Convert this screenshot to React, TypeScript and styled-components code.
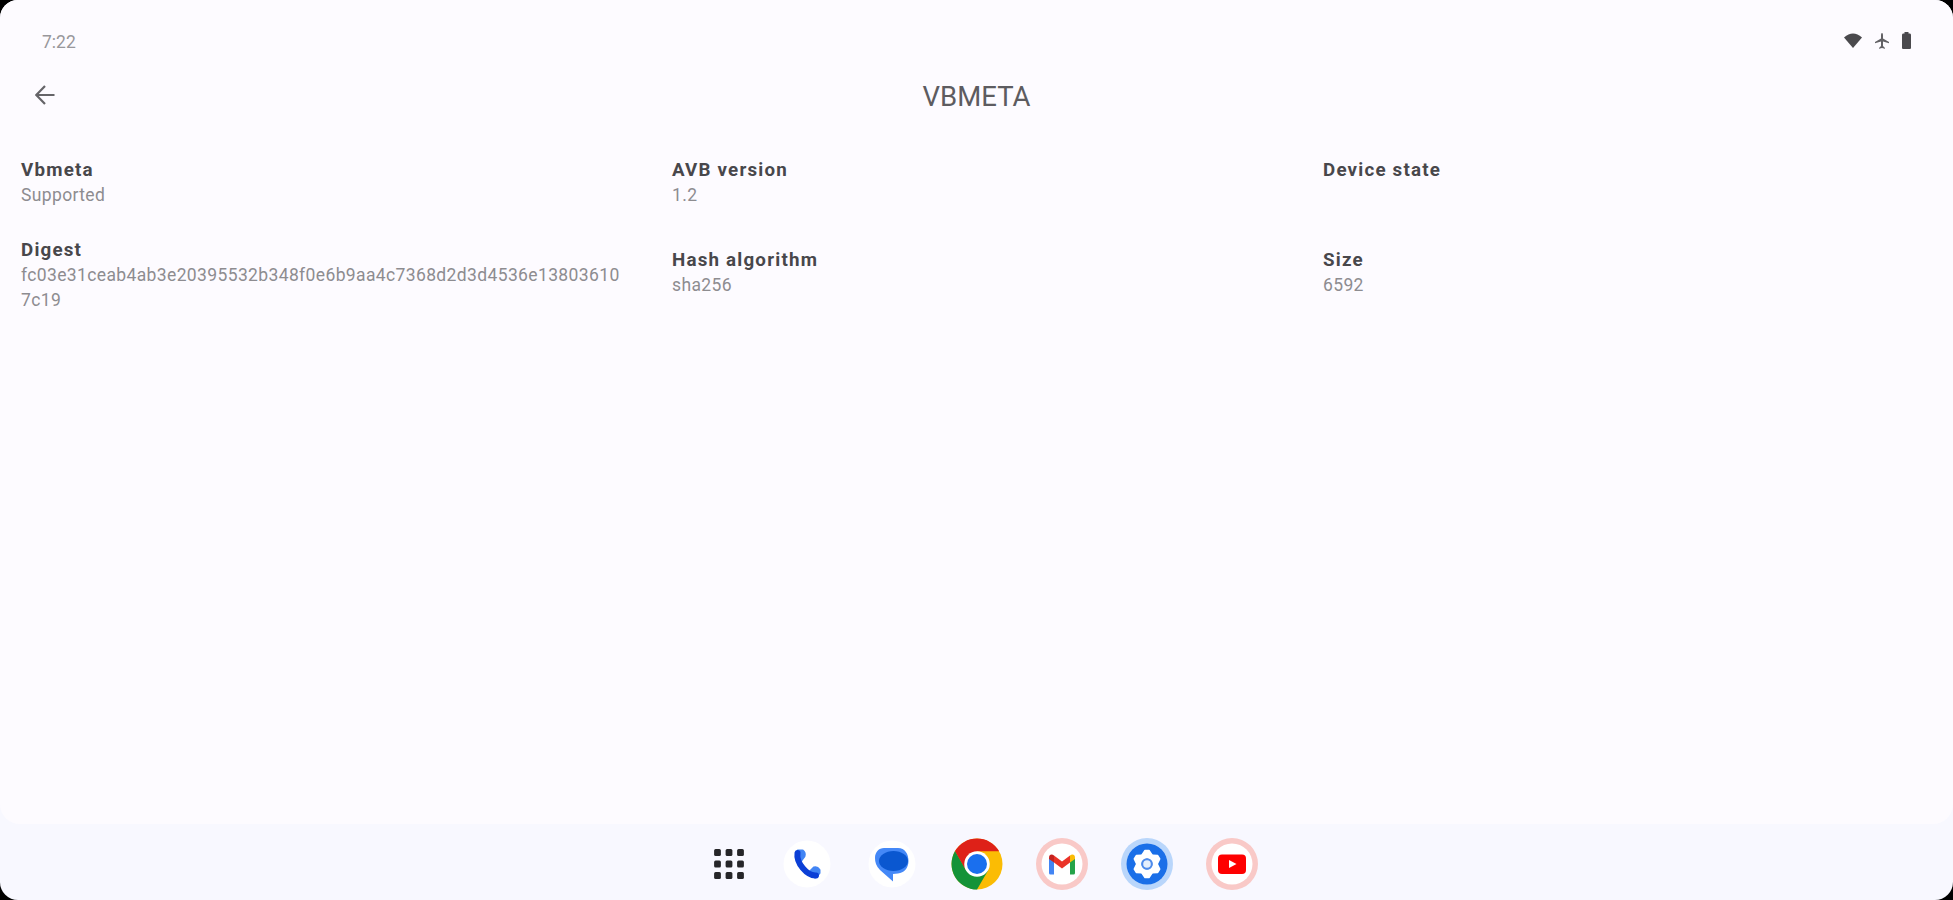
import React from "react"
import styled, { createGlobalStyle } from "styled-components"

const GlobalStyle = createGlobalStyle`
  body {
    margin: 0;
    background: #000;
    font-family: Roboto, "Liberation Sans", sans-serif;
  }
`

const Screen = styled.div`
  display: flex;
  flex-direction: column;
  height: 900px;
  overflow: hidden;
  border-radius: 18px;
  background: #f8f8ff;
`

const Panel = styled.main`
  flex: 1;
  border-radius: 0 0 20px 20px;
  background: #fdfbff;
`

const StatusBar = styled.header`
  display: flex;
  align-items: center;
  justify-content: space-between;
  box-sizing: border-box;
  height: 64px;
  padding: 17px 42px 0 42px;
`

const Clock = styled.span`
  padding-top: 3px;
  font-size: 17.5px;
  line-height: 20px;
  color: #98979b;
`

const StatusIcons = styled.div`
  display: flex;
  align-items: center;
  gap: 12px;

  > svg {
    display: block;
  }
`

const AppBar = styled.div`
  display: grid;
  grid-template-columns: 80px 1fr 80px;
  align-items: center;
  height: 64px;
`

const BackButton = styled.button`
  display: flex;
  width: 40px;
  margin-left: 25px;
  padding: 0 0 3px;
  justify-content: center;
  border: 0;
  background: none;
`

const Title = styled.h1`
  margin: 0;
  font-size: 27.5px;
  font-weight: 400;
  line-height: 35px;
  text-align: center;
  color: #5d5c60;
`

const InfoGrid = styled.div`
  display: grid;
  grid-template-columns: repeat(3, 1fr);
  row-gap: 25px;
  align-items: center;
  padding-top: 30px;
`

const Cell = styled.div`
  padding: 0 25px 0 21px;
`

const Label = styled.div`
  font-size: 18.75px;
  font-weight: 700;
  line-height: 25px;
  letter-spacing: 1.2px;
  color: #48474b;
`

const Value = styled.div`
  min-height: 30px;
  font-size: 17.5px;
  line-height: 25px;
  letter-spacing: 0.37px;
  word-break: break-all;
  color: #8d8c90;
`

const Taskbar = styled.nav`
  display: flex;
  align-items: center;
  justify-content: center;
  gap: 33px;
  box-sizing: border-box;
  height: 76px;
  padding: 3px 0 0 7px;

  > svg {
    display: block;
  }

  > svg:first-child {
    margin-right: -7px;
  }
`

const items = [
  { label: "Vbmeta", value: "Supported" },
  { label: "AVB version", value: "1.2" },
  { label: "Device state", value: "" },
  {
    label: "Digest",
    value: "fc03e31ceab4ab3e20395532b348f0e6b9aa4c7368d2d3d4536e138036107c19",
  },
  { label: "Hash algorithm", value: "sha256" },
  { label: "Size", value: "6592" },
]

const Icon = ({ children }: { children: React.ReactNode }) => (
  <svg width="52" height="52" viewBox="-26 -26 52 52">
    {children}
  </svg>
)

const AppsIcon = () => (
  <Icon>
    {[-11.5, 0, 11.5].map(y =>
      [-11.5, 0, 11.5].map(x => (
        <rect
          key={`${x}${y}`}
          x={x - 3.4}
          y={y - 3.4}
          width="6.8"
          height="6.8"
          rx="1.5"
          fill="#262629"
        />
      ))
    )}
  </Icon>
)

const PhoneIcon = () => (
  <Icon>
    <circle r="23.5" fill="#fff" />
    <path
      d="M-9-13-4.500-13Q-2-11-3-8L-6-4ZM3 8 7 4Q10 3 12 6V9L8 13Z"
      fill="#4285f4"
      stroke="#4285f4"
      strokeWidth="3"
      strokeLinejoin="round"
    />
    <path
      d="M-9.500-11C-11-1 0 12 9 11.500"
      fill="none"
      stroke="#0b3fd6"
      strokeWidth="6"
      strokeLinecap="round"
    />
  </Icon>
)

const MessagesIcon = () => (
  <Icon>
    <circle r="23.500" fill="#fff" />
    <path
      d="M-8-16H6C13-16 16.500-10 16.500-3 16.500 4 12 9 6 9.500L1 10V17.500L-12 6C-16 2-17-2-17-6-17-12-13-16-8-16Z"
      fill="#4488f7"
    />
    <ellipse cx="1.500" cy="-3" rx="14.500" ry="10" fill="#0a57d0" />
  </Icon>
)

const ChromeIcon = () => (
  <Icon>
    <circle r="25.500" fill="#fbbc04" />
    <path d="M0 0-22.080-12.750A25.500 25.500 0 0 1 22.080-12.750L0-12.750Z" fill="#de2118" />
    <path
      d="M-22.080-12.750A25.500 25.500 0 0 0 0 25.500L11.040 6.375 0 0-11.040 6.375Z"
      fill="#149338"
    />
    <path d="M0-12.750H-11L-11.040 6.375-22.080-12.750Z" fill="#de2118" />
    <path d="M-22.080-12.750-11.040 6.375 0 12.750-6 18-22 6Z" fill="#149338" />
    <circle r="12.750" fill="#fff" />
    <circle r="10" fill="#1a6fee" />
  </Icon>
)

const GmailIcon = () => (
  <Icon>
    <circle r="26" fill="#f9c9c7" />
    <circle r="20.500" fill="#fff" />
    <path d="M-13-6-8-2.500V10.500H-11.500Q-13 10.500-13 9Z" fill="#4285f4" />
    <path d="M13-6 8-2.500V10.500H11.500Q13 10.500 13 9Z" fill="#25a349" />
    <path d="M-8-8.500 0-2.500 8-8.500V-1.500L0 4.500-8-1.500Z" fill="#ea3328" />
    <path d="M-13-6C-13-10-10-10-8-8.500V-1.500L-13-5Z" fill="#c5221f" />
    <path d="M13-6C13-10 10-10 8-8.500V-1.500L13-5Z" fill="#fbbc04" />
  </Icon>
)

const SettingsIcon = () => (
  <Icon>
    <circle r="26" fill="#b9d6fb" />
    <circle r="20.500" fill="#1a6fe8" />
    {[0, 60, 120, 180, 240, 300].map(a => (
      <path
        key={a}
        d="M-5-9-2-13.500H2L5-9Z"
        fill="#fff"
        stroke="#fff"
        strokeWidth="1.500"
        strokeLinejoin="round"
        transform={`rotate(${a})`}
      />
    ))}
    <circle r="8" fill="none" stroke="#fff" strokeWidth="5" />
    <circle r="4.800" fill="#e6effc" stroke="#4f8bea" strokeWidth="2" />
  </Icon>
)

const YoutubeIcon = () => (
  <Icon>
    <circle r="26" fill="#f9c9c7" />
    <circle r="20.500" fill="#fff" />
    <rect x="-14" y="-9.500" width="28" height="19.500" rx="4" fill="#fe0000" />
    <path d="M-3-4 4.500 0-3 4Z" fill="#fff" />
  </Icon>
)

const App: React.FC = () => {
  return (
    <>
      <GlobalStyle />
      <Screen>
        <Panel>
          <StatusBar>
            <Clock>7:22</Clock>
            <StatusIcons>
              <svg width="18" height="16" viewBox="0 0 18 16">
                <path d="M0 4.500Q9-3.500 18 4.500L9 15Z" fill="#4a494d" />
              </svg>
              <svg width="16" height="18" viewBox="0 0 16 18">
                <path
                  d="M8 1Q9 1 9 3V6.500L15 10V11.200L9 9.500V14L11 16V16.800L8 16 5 16.800V16L7 14V9.500L1 11.200V10L7 6.500V3Q7 1 8 1Z"
                  fill="#626165"
                />
              </svg>
              <svg width="9" height="17" viewBox="0 0 9 17">
                <path
                  d="M2.500 0H6.500V1.500H8Q9 1.500 9 3V15.500Q9 17 8 17H1Q0 17 0 15.500V3Q0 1.500 1 1.500H2.500Z"
                  fill="#4a494d"
                />
              </svg>
            </StatusIcons>
          </StatusBar>
          <AppBar>
            <BackButton aria-label="Back">
              <svg width="20" height="20" viewBox="0 0 20 20">
                <path
                  d="M19.500 10H1.500M10 1 1.300 10 10 19"
                  fill="none"
                  stroke="#656468"
                  strokeWidth="2.200"
                />
              </svg>
            </BackButton>
            <Title>VBMETA</Title>
          </AppBar>
          <InfoGrid>
            {items.map(t => (
              <Cell key={t.label}>
                <Label>{t.label}</Label>
                <Value>{t.value}</Value>
              </Cell>
            ))}
          </InfoGrid>
        </Panel>
        <Taskbar>
          <AppsIcon />
          <PhoneIcon />
          <MessagesIcon />
          <ChromeIcon />
          <GmailIcon />
          <SettingsIcon />
          <YoutubeIcon />
        </Taskbar>
      </Screen>
    </>
  )
}

export default App
